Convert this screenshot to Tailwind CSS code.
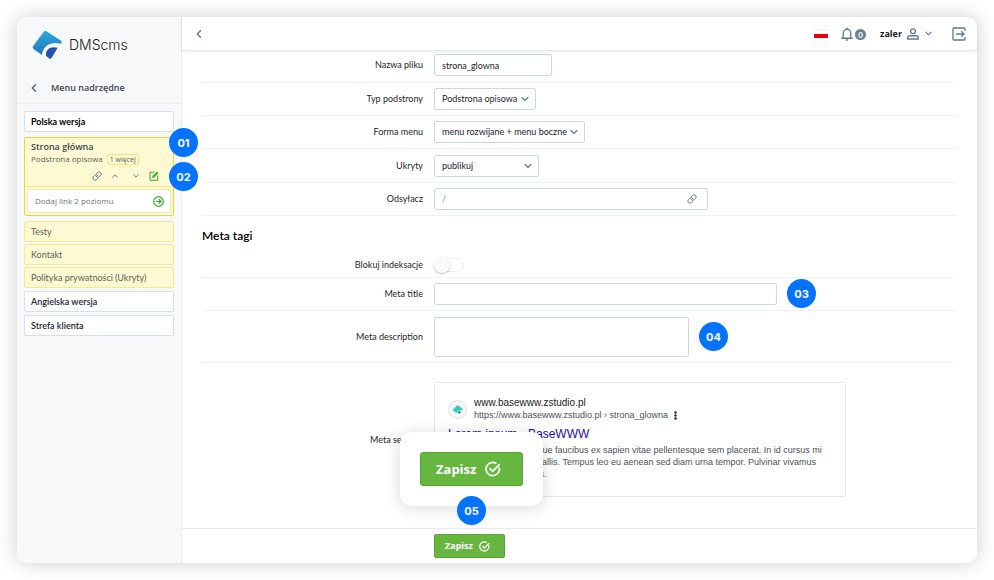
<!DOCTYPE html>
<html lang="pl">
<head>
<meta charset="utf-8">
<meta name="viewport" content="width=device-width, initial-scale=1">
<title>DMScms</title>
<script src="https://cdn.jsdelivr.net/npm/@tailwindcss/browser@4"></script>
</head>
<body class="bg-white font-['Lato','Noto_Sans',sans-serif] text-[9px] leading-[12px] text-[#1d242b]">
<svg class="hidden">
  <symbol id="down" viewBox="0 0 10 10"><path d="M2 3.500l3 3 3-3" fill="none" stroke="currentColor" stroke-width="1.200" stroke-linecap="round"/></symbol>
  <symbol id="left" viewBox="0 0 10 10"><path d="M6.500 1.800L3.300 5l3.200 3.200" fill="none" stroke="currentColor" stroke-width="1.400" stroke-linecap="round"/></symbol>
  <symbol id="link" viewBox="0 0 24 24"><g fill="none" stroke="currentColor" stroke-width="2.300" stroke-linecap="round"><path d="M10 13a5 5 0 0 0 7.540.540l3-3a5 5 0 0 0-7.070-7.070l-3.500 3.500"/><path d="M14 11a5 5 0 0 0-7.540-.540l-3 3a5 5 0 0 0 7.070 7.070l3.500-3.500"/></g></symbol>
  <symbol id="check" viewBox="0 0 24 24"><g fill="none" stroke="currentColor" stroke-width="2.600" stroke-linecap="round" stroke-linejoin="round"><path d="M21.500 10.500A10 10 0 1 1 16 3"/><path d="M7.500 11.500l4 4L21.500 5.500"/></g></symbol>
</svg>

<div class="min-h-screen p-[17px] flex">
  <div class="flex flex-1 rounded-[10px] bg-white shadow-[0_0_20px_rgba(0,0,0,0.2)]">

    <aside class="w-[165px] shrink-0 rounded-l-[10px] border-r border-[#e6ebf0] bg-[#f6f8fa]">
      <div class="flex h-[56px] items-center gap-[7px] pl-[15px]">
        <svg class="size-[30px]" viewBox="0 0 30 30" aria-hidden="true">
          <defs><linearGradient id="lg" x1="0" y1="0" x2="0" y2="1"><stop offset="0" stop-color="#2aa9e0"/><stop offset="1" stop-color="#2276ba"/></linearGradient></defs>
          <path d="M12 1.600q1-1.200 2.500-.4L28.800 10.500q1.400 1 .6 2.400l-.4.800C19.500 11 11.200 15 9.900 25L1.600 18.900q-1.500-1.200-.4-2.800z" fill="url(#lg)"/>
          <path d="M14 24c0-5.200 5-8.200 11.700-6.300l-6.200 10.300q-.9 1.300-2.200.4L14 26z" fill="#2455a8"/>
        </svg>
        <span class="font-['Inter',sans-serif] text-[14px] leading-[20px] font-light text-[#1c1e20]">DMScms</span>
      </div>
      <a href="#" class="flex h-[31px] items-center gap-[12px] border-b border-[#e9eef2] pl-[12px] font-['Open_Sans',sans-serif] text-[9px] font-semibold text-[#3a4651]">
        <svg class="size-[10px] text-[#53697c]"><use href="#left"/></svg>Menu nadrzędne
      </a>

      <nav class="flex flex-col gap-[3px] px-[7px] pt-[7px]">
        <a href="#" class="flex h-[21px] items-center rounded-[2px] border border-[#d5e0e9] bg-white px-[6px] font-bold text-black">Polska wersja</a>
        <div class="flex flex-col gap-[2px] pt-[2px]">
          <div class="relative mb-[3px] flex h-[79px] flex-col rounded-[2px] border border-[#e3d64f] bg-[#fcf9d3]">
            <div class="flex-1 border-b border-[#f0e88a] px-[6px] pt-[3px]">
              <a href="#" class="block font-['Open_Sans',sans-serif] font-semibold text-[#3f4a4f]">Strona główna</a>
              <div class="flex items-center gap-[4px] font-['Open_Sans',sans-serif] text-[8px] text-[#5d6552]">Podstrona opisowa
                <span class="rounded-[2px] border border-[#f3e783] px-[2px] text-[7px] leading-[9px]">1 więcej</span>
              </div>
              <div class="mt-[6px] flex items-center justify-end gap-[9px] pr-[8px] text-[#66788a]">
                <button type="button" aria-label="Link"><svg class="block size-[10px]"><use href="#link"/></svg></button>
                <button type="button" aria-label="W górę"><svg class="block size-[8px] rotate-180"><use href="#down"/></svg></button>
                <button type="button" aria-label="W dół" class="pl-[4px]"><svg class="block size-[8px]"><use href="#down"/></svg></button>
                <button type="button" aria-label="Edytuj" class="text-[#37a82b]"><svg class="block size-[10px]" viewBox="0 0 20 20" fill="none" stroke="currentColor" stroke-width="2"><path d="M11 2.500H2v16h15.500V9"/><path d="M6.500 13.800l1-3.800L16 1.500l2.700 2.700-8.600 8.500z" fill="currentColor" stroke-width=".8"/></svg></button>
              </div>
            </div>
            <div class="p-[2px]">
              <div class="flex h-[24px] items-center rounded-[3px] border border-[#ece7b4] bg-white pr-[6px] pl-[7px]">
                <input aria-label="Dodaj link 2 poziomu" placeholder="Dodaj link 2 poziomu" class="min-w-0 flex-1 font-['Open_Sans',sans-serif] text-[8px] outline-none placeholder:text-[#6d747b]">
                <button type="button" aria-label="Dodaj" class="text-[#37a82b]"><svg class="block size-[11px]" viewBox="0 0 22 22" fill="none" stroke="currentColor" stroke-width="2.400"><circle cx="11" cy="11" r="9.600"/><path d="M5.500 11h10M11.500 6.500L16 11l-4.500 4.500"/></svg></button>
              </div>
            </div>
            <span class="absolute top-[-10px] left-[144px] flex size-[29px] items-center justify-center rounded-full bg-[#0573ff] font-['Inter',sans-serif] text-[11px] font-bold text-white">01</span>
            <span class="absolute top-[24px] left-[144px] flex size-[29px] items-center justify-center rounded-full bg-[#0573ff] font-['Inter',sans-serif] text-[11px] font-bold text-white">02</span>
          </div>
          <a href="#" class="flex h-[21px] items-center rounded-[2px] border border-[#f3ea8c] bg-[#fcf9d3] px-[6px] text-[#5d6552]">Testy</a>
          <a href="#" class="flex h-[21px] items-center rounded-[2px] border border-[#f3ea8c] bg-[#fcf9d3] px-[6px] text-[#5d6552]">Kontakt</a>
          <a href="#" class="flex h-[21px] items-center gap-[2px] rounded-[2px] border border-[#f3ea8c] bg-[#fcf9d3] px-[6px] text-[#5d6552]">Polityka prywatności <span>(Ukryty)</span></a>
        </div>
        <a href="#" class="flex h-[21px] items-center rounded-[2px] border border-[#d5e0e9] bg-white px-[6px] font-semibold">Angielska wersja</a>
        <a href="#" class="flex h-[21px] items-center rounded-[2px] border border-[#d5e0e9] bg-white px-[6px] font-semibold">Strefa klienta</a>
      </nav>
    </aside>

    <div class="flex min-w-0 flex-1 flex-col">
      <header class="flex h-[34px] items-center border-b border-[#e3e9ee] pr-[11px] pl-[12px] text-[#5f7890] shadow-[0_1px_3px_rgba(80,100,120,0.12)]">
        <button type="button" aria-label="Wstecz"><svg class="block size-[10px]"><use href="#left"/></svg></button>
        <button type="button" aria-label="Język: polski" class="ml-auto flex h-[9px] w-[14px] flex-col justify-end border-t border-[#eeeeee] bg-white"><span class="h-[4px] w-full bg-[#e90010]"></span></button>
        <button type="button" aria-label="Powiadomienia" class="ml-[12px] flex items-center gap-[1px]">
          <svg class="size-[14px]" viewBox="0 0 28 28" fill="none" stroke="currentColor" stroke-width="2.600"><path d="M2.500 22.500h23M6.500 22V12a7.500 7.500 0 0 1 15 0V22M14 4.500V1"/><path d="M11.500 26h5"/></svg>
          <span class="mt-[2px] flex size-[11px] items-center justify-center rounded-full bg-[#6a8093] text-[8px] font-bold text-white">0</span>
        </button>
        <button type="button" class="ml-[14px] flex items-center gap-[5px] text-[9px] font-bold text-[#15191c]"><span class="font-['Open_Sans',sans-serif]">zaler</span>
          <svg class="size-[12px] text-[#5f7890]" viewBox="0 0 24 24" fill="none" stroke="currentColor" stroke-width="2.600"><circle cx="12" cy="6.500" r="4.800"/><path d="M1.500 22v-2.500Q1.500 15.500 6 15.500h12q4.500 0 4.500 4V22z"/></svg>
          <svg class="size-[9px] text-[#5f7890]"><use href="#down"/></svg>
        </button>
        <button type="button" aria-label="Wyloguj" class="ml-[19px]"><svg class="block size-[14px]" viewBox="0 0 28 28" fill="none" stroke="currentColor" stroke-width="2.600"><path d="M26 8V4q0-2-2-2H4Q2 2 2 4v20q0 2 2 2h20q2 0 2-2v-4"/><path d="M8 14h16M18.500 8.500L24 14l-5.500 5.500"/></svg></button>
      </header>

      <form class="flex flex-1 flex-col">
        <div class="flex-1 px-[20px] pt-[3px]">
          <div class="flex items-center gap-[11px] border-b border-[#eff2f4] pb-[6px]">
            <label for="file" class="w-[221px] text-right">Nazwa pliku</label>
            <input id="file" value="strona_glowna" class="h-[22px] w-[118px] rounded-[2px] border border-[#c9d8e4] px-[7px]">
          </div>
          <div class="flex items-center gap-[11px] border-b border-[#eff2f4] py-[5px]">
            <label for="type" class="w-[221px] text-right">Typ podstrony</label>
            <div class="relative w-[102px]">
              <select id="type" class="block h-[22px] w-full appearance-none rounded-[2px] border border-[#c9d8e4] bg-white pl-[7px]"><option>Podstrona opisowa</option></select>
              <svg class="pointer-events-none absolute top-[6px] right-[6px] size-[10px] text-[#5f7890]"><use href="#down"/></svg>
            </div>
          </div>
          <div class="flex items-center gap-[11px] border-b border-[#eff2f4] py-[5px]">
            <label for="menu" class="w-[221px] text-right">Forma menu</label>
            <div class="relative w-[151px]">
              <select id="menu" class="block h-[22px] w-full appearance-none rounded-[2px] border border-[#c9d8e4] bg-white pl-[7px]"><option>menu rozwijane + menu boczne</option></select>
              <svg class="pointer-events-none absolute top-[6px] right-[6px] size-[10px] text-[#5f7890]"><use href="#down"/></svg>
            </div>
          </div>
          <div class="flex items-center gap-[11px] border-b border-[#eff2f4] pt-[6px] pb-[5px]">
            <label for="hid" class="w-[221px] text-right">Ukryty</label>
            <div class="relative w-[105px]">
              <select id="hid" class="block h-[22px] w-full appearance-none rounded-[2px] border border-[#c9d8e4] bg-white pl-[7px]"><option>publikuj</option></select>
              <svg class="pointer-events-none absolute top-[6px] right-[6px] size-[10px] text-[#5f7890]"><use href="#down"/></svg>
            </div>
          </div>
          <div class="flex items-center gap-[11px] border-b border-[#eff2f4] py-[5px]">
            <label for="ref" class="w-[221px] text-right">Odsyłacz</label>
            <div class="flex h-[22px] w-[274px] items-center rounded-[2px] border border-[#c9d8e4] pr-[10px] pl-[7px]">
              <input id="ref" value="/" class="min-w-0 flex-1 text-[#3b9bd1] outline-none">
              <svg class="size-[10px] text-[#5f7890]"><use href="#link"/></svg>
            </div>
          </div>

          <h2 class="pt-[12px] pb-[11px] font-['Lato',sans-serif] text-[12px] leading-[16px] font-semibold text-black">Meta tagi</h2>

          <div class="flex items-center gap-[11px] border-b border-[#eff2f4] pt-[2px] pb-[4px]">
            <label for="block" class="w-[221px] text-right">Blokuj indeksacje</label>
            <span class="relative flex h-[16px] w-[30px] items-center">
              <input id="block" type="checkbox" role="switch" class="h-[14px] w-full appearance-none rounded-full border border-[#e9eef2] bg-white">
              <span class="pointer-events-none absolute left-0 size-[16px] rounded-full bg-[#fafafa] shadow-[0_1px_2px_rgba(0,0,0,0.25)]"></span>
            </span>
          </div>
          <div class="flex items-center gap-[11px] border-b border-[#eff2f4] py-[5px]">
            <label for="mt" class="w-[221px] text-right">Meta title</label>
            <div class="relative w-[343px]">
              <input id="mt" class="block h-[22px] w-full rounded-[2px] border border-[#c9d8e4] px-[7px]">
              <span class="absolute top-[-4px] left-[353px] flex size-[29px] items-center justify-center rounded-full bg-[#0573ff] font-['Inter',sans-serif] text-[11px] font-bold text-white">03</span>
            </div>
          </div>
          <div class="flex items-center gap-[11px] border-b border-[#eff2f4] pt-[6px] pb-[5px]">
            <label for="md" class="w-[221px] text-right">Meta description</label>
            <div class="relative w-[255px]">
              <textarea id="md" class="block h-[40px] w-full resize-none rounded-[2px] border border-[#c9d8e4] px-[7px]"></textarea>
              <span class="absolute top-[5px] left-[265px] flex size-[29px] items-center justify-center rounded-full bg-[#0573ff] font-['Inter',sans-serif] text-[11px] font-bold text-white">04</span>
            </div>
          </div>

          <div class="flex items-center gap-[11px] pt-[19px]">
            <span class="w-[221px] text-right">Meta serwisu</span>
            <div class="relative h-[115px] w-[412px] border border-[#e3e9ee] px-[13px] pt-[14px] font-['Liberation_Sans',Arial,sans-serif] text-[#4d5156]">
              <div class="flex items-center gap-[7px]">
                <span class="flex size-[19px] items-center justify-center rounded-full border border-[#dfe2e6] bg-[#f4f6f8]">
                  <svg class="size-[11px]" viewBox="0 0 22 22"><path d="M1 12L11 2l10 7v4c-6-1-9 1-12 5z" fill="#35cbbd"/><path d="M11 17q3-4 7-2l-3 5z" fill="#2b7f9d"/></svg>
                </span>
                <div>
                  <div class="text-[10px] leading-[12px] text-[#202124]">www.basewww.zstudio.pl</div>
                  <div class="flex items-center gap-[6px] leading-[12px]">https://www.basewww.zstudio.pl › strona_glowna
                    <svg class="h-[9px] w-[3px]" viewBox="0 0 3 9"><g fill="#202124"><circle cx="1.500" cy="1.500" r="1.200"/><circle cx="1.500" cy="4.500" r="1.200"/><circle cx="1.500" cy="7.500" r="1.200"/></g></svg>
                  </div>
                </div>
              </div>
              <a href="#" class="mt-[5px] block text-[12px] leading-[16px] text-[#1a0dab]">Lorem ipsum - BaseWWW</a>
              <p class="mt-[2px] text-[9px] leading-[12px] whitespace-nowrap">Lorem ipsum elit. Quisque faucibus ex sapien vitae pellentesque sem placerat. In id cursus mi<br>pretium tellus duis convallis. Tempus leo eu aenean sed diam urna tempor. Pulvinar vivamus<br>fringilla lacus nec metus.</p>

              <div class="absolute top-[49px] left-[-35px] rounded-[12px] bg-white p-[20px] shadow-[0_2px_16px_rgba(0,0,0,0.16)]">
                <button type="button" class="flex h-[34px] w-[103px] items-center gap-[9px] rounded-[3px] border border-[#55a531] bg-[#67b640] pl-[15px] font-['Open_Sans',sans-serif] text-[13px] font-bold text-white">Zapisz<svg class="size-[16px]"><use href="#check"/></svg></button>
                <span class="absolute top-[64px] left-[57px] flex size-[29px] items-center justify-center rounded-full bg-[#0573ff] font-['Inter',sans-serif] text-[11px] font-bold text-white">05</span>
              </div>
            </div>
          </div>
        </div>

        <footer class="flex h-[35px] items-center border-t border-[#e6ebf0] pl-[252px]">
          <button type="submit" class="flex h-[24px] w-[71px] items-center gap-[6px] rounded-[2px] border border-[#55a531] bg-[#67b640] pl-[10px] font-['Open_Sans',sans-serif] font-bold text-white">Zapisz<svg class="size-[11px]"><use href="#check"/></svg></button>
        </footer>
      </form>
    </div>
  </div>
</div>
</body>
</html>
